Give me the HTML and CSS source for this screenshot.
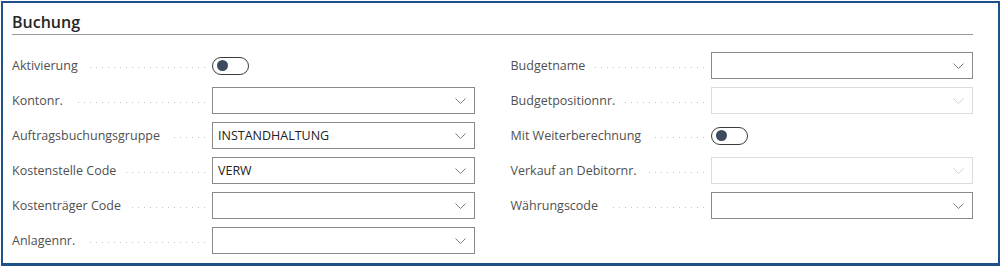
FILE: index.html
```html
<!DOCTYPE html>
<html lang="de">
<head>
    <meta charset="UTF-8">
    <title>Buchung</title>
    <link rel="stylesheet" href="styles.css">
</head>
<body>
    <div class="card">
        <div class="card-title">Buchung</div>
        <div class="fields">
            <div class="column">
                <div class="field">
                    <div class="label"><span>Aktivierung</span><i class="dots"></i></div>
                    <div class="toggle"><span class="knob"></span></div>
                </div>
                <div class="field">
                    <div class="label"><span>Kontonr.</span><i class="dots"></i></div>
                    <div class="select"><span class="value"></span><svg class="chevron" viewBox="0 0 11 6"><polyline points="0.5,0.5 5.5,5.5 10.5,0.5"/></svg></div>
                </div>
                <div class="field">
                    <div class="label"><span>Auftragsbuchungsgruppe</span><i class="dots"></i></div>
                    <div class="select"><span class="value">INSTANDHALTUNG</span><svg class="chevron" viewBox="0 0 11 6"><polyline points="0.5,0.5 5.5,5.5 10.5,0.5"/></svg></div>
                </div>
                <div class="field">
                    <div class="label"><span>Kostenstelle Code</span><i class="dots"></i></div>
                    <div class="select"><span class="value">VERW</span><svg class="chevron" viewBox="0 0 11 6"><polyline points="0.5,0.5 5.5,5.5 10.5,0.5"/></svg></div>
                </div>
                <div class="field">
                    <div class="label"><span>Kostenträger Code</span><i class="dots"></i></div>
                    <div class="select"><span class="value"></span><svg class="chevron" viewBox="0 0 11 6"><polyline points="0.5,0.5 5.5,5.5 10.5,0.5"/></svg></div>
                </div>
                <div class="field">
                    <div class="label"><span>Anlagennr.</span><i class="dots"></i></div>
                    <div class="select"><span class="value"></span><svg class="chevron" viewBox="0 0 11 6"><polyline points="0.5,0.5 5.5,5.5 10.5,0.5"/></svg></div>
                </div>
            </div>
            <div class="column">
                <div class="field">
                    <div class="label"><span>Budgetname</span><i class="dots"></i></div>
                    <div class="select"><span class="value"></span><svg class="chevron" viewBox="0 0 11 6"><polyline points="0.5,0.5 5.5,5.5 10.5,0.5"/></svg></div>
                </div>
                <div class="field">
                    <div class="label"><span>Budgetpositionnr.</span><i class="dots"></i></div>
                    <div class="select disabled"><span class="value"></span><svg class="chevron" viewBox="0 0 11 6"><polyline points="0.5,0.5 5.5,5.5 10.5,0.5"/></svg></div>
                </div>
                <div class="field">
                    <div class="label"><span>Mit Weiterberechnung</span><i class="dots"></i></div>
                    <div class="toggle"><span class="knob"></span></div>
                </div>
                <div class="field">
                    <div class="label"><span>Verkauf an Debitornr.</span><i class="dots"></i></div>
                    <div class="select disabled"><span class="value"></span><svg class="chevron" viewBox="0 0 11 6"><polyline points="0.5,0.5 5.5,5.5 10.5,0.5"/></svg></div>
                </div>
                <div class="field">
                    <div class="label"><span>Währungscode</span><i class="dots"></i></div>
                    <div class="select"><span class="value"></span><svg class="chevron" viewBox="0 0 11 6"><polyline points="0.5,0.5 5.5,5.5 10.5,0.5"/></svg></div>
                </div>
            </div>
        </div>
    </div>
</body>
</html>
```

FILE: styles.css
```css
:root {
    --frame-color: #1d5187;
    --label-color: #505050;
    --text-color: #212121;
    --border-color: #8a8a8a;
}

* {
    margin: 0;
    padding: 0;
    box-sizing: border-box;
    font-family: "Open Sans", "Noto Sans", sans-serif;
}

body {
    background: #fff;
}

.card {
    margin: 1px;
    width: 999px;
    height: 265px;
    border: 2px solid var(--frame-color);
    border-bottom-width: 3px;
    padding: 9px 0 0 9px;
}

.card-title {
    width: 961px;
    font-size: 16px;
    font-weight: 600;
    color: #262626;
    line-height: 21px;
    padding-bottom: 1px;
    border-bottom: 1px solid #9a9a9a;
}

.fields {
    width: 961px;
    margin-top: 17px;
    display: grid;
    grid-template-columns: 1fr 1fr;
    column-gap: 36px;
}

.column {
    display: flex;
    flex-direction: column;
    gap: 8px;
}

.field {
    display: flex;
    align-items: center;
    height: 27px;
}

.label {
    width: 200px;
    display: flex;
    align-items: center;
    font-size: 12.5px;
    color: var(--label-color);
    padding-right: 7px;
    white-space: nowrap;
}

.dots {
    flex: 1;
    height: 1px;
    margin: 3px 0 0 10px;
    background: repeating-linear-gradient(to left, #c4c4c4 0 1px, transparent 1px 6px);
}

.select {
    flex: 1;
    height: 27px;
    border: 1px solid var(--border-color);
    display: flex;
    align-items: center;
    padding: 0 8px 0 5px;
    background: #fff;
}

.select .value {
    flex: 1;
    font-size: 12.5px;
    color: var(--text-color);
}

.chevron {
    width: 11px;
    height: 6px;
    fill: none;
    stroke: #7d7d7d;
    stroke-width: 1;
}

.select.disabled {
    border-color: #dcdcdc;
}

.select.disabled .chevron {
    stroke: #cfcfcf;
}

.toggle {
    width: 37px;
    height: 18px;
    border: 1px solid #3b3b3b;
    border-radius: 9px;
    display: flex;
    align-items: center;
    padding-left: 4px;
}

.knob {
    width: 11px;
    height: 11px;
    border-radius: 50%;
    background: #3e4b5e;
}
```
